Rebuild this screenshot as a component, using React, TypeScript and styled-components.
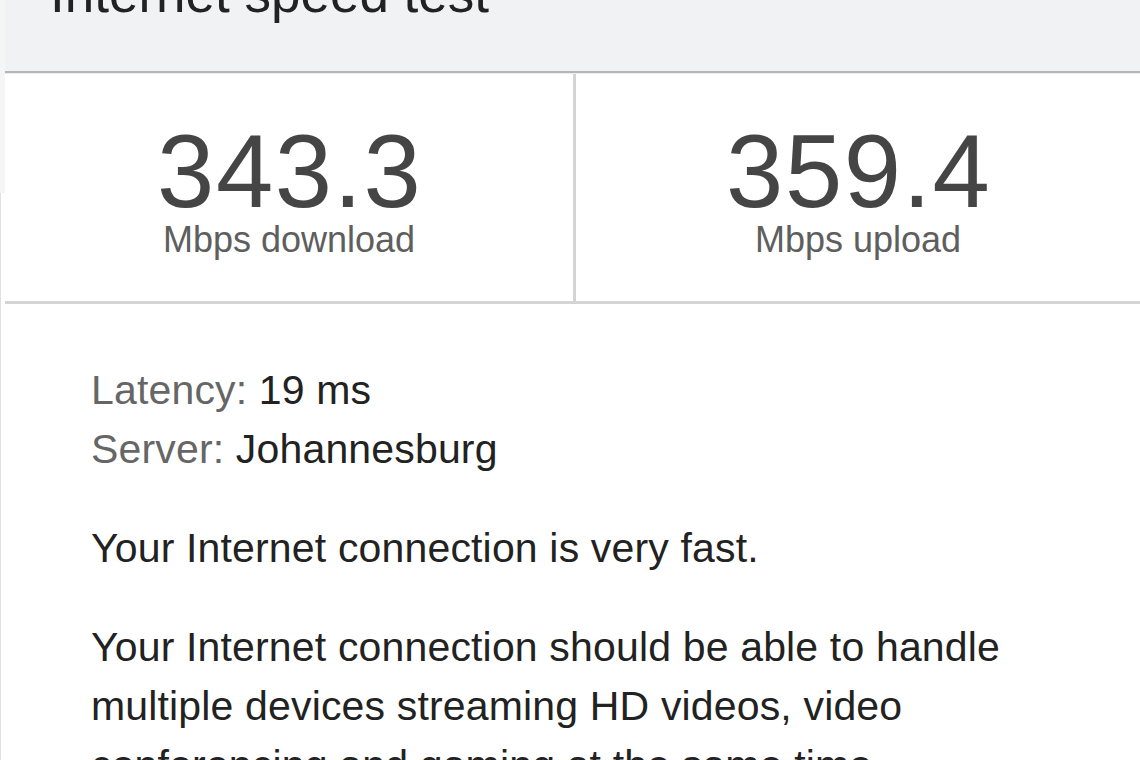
import React from "react";
import styled, { createGlobalStyle } from "styled-components";

const GlobalStyle = createGlobalStyle`
  html, body {
    margin: 0;
    padding: 0;
    height: 100%;
    overflow: hidden;
    background: #ffffff;
  }
  body {
    font-family: "Liberation Sans", Arial, Helvetica, sans-serif;
    -webkit-font-smoothing: antialiased;
  }
`;

const Page = styled.div`
  display: flex;
  width: 1140px;
  height: 760px;
  overflow: hidden;
`;

const Gutter = styled.div`
  flex: 0 0 5px;
  background:
    linear-gradient(to bottom, #f5f5f6 0, #f5f5f6 193px, transparent 193px),
    linear-gradient(to right, #e2e2e2 0, #e2e2e2 1px, #ffffff 1px);
`;

const Card = styled.div`
  flex: 1;
  min-width: 0;
  background: #ffffff;
`;

const Header = styled.div`
  height: 71px;
  background: #f1f2f4;
  border-bottom: 2px solid #b6b6b6;
  box-shadow: 0 1px 0 #ececec;
  padding-left: 45px;
  overflow: hidden;
  position: relative;
  z-index: 1;
`;

const Title = styled.h1`
  margin: -33px 0 0;
  font-size: 53px;
  line-height: 1;
  font-weight: 400;
  color: #222222;
  white-space: nowrap;
`;

const Stats = styled.div`
  display: flex;
  border-bottom: 3px solid #d4d4d4;
`;

const Stat = styled.div<{ $divider?: boolean }>`
  flex: ${(p) => (p.$divider ? "0 0 571px" : "1")};
  height: 228px;
  box-sizing: border-box;
  padding-top: 50px;
  display: flex;
  flex-direction: column;
  align-items: center;
  border-right: ${(p) => (p.$divider ? "3px solid #d4d4d4" : "none")};
`;

const Value = styled.div`
  font-size: 103px;
  line-height: 98px;
  color: #454545;
  letter-spacing: 1.5px;
  margin-right: -1.5px;
`;

const Label = styled.div`
  margin-top: 1px;
  font-size: 36px;
  line-height: 36px;
  color: #5e5e5e;
`;

const Info = styled.div`
  padding: 57px 40px 0 86px;
`;

const Para = styled.p`
  margin: 0 0 40px;
  font-size: 41px;
  line-height: 59px;
  letter-spacing: 0.16px;
  color: #222222;
`;

const Key = styled.span`
  color: #666666;
`;

const Line = styled.span`
  display: block;
`;

export default function App() {
  return (
    <>
      <GlobalStyle />
      <Page>
        <Gutter />
        <Card>
          <Header>
            <Title>Internet speed test</Title>
          </Header>
          <Stats>
            <Stat $divider>
              <Value>343.3</Value>
              <Label>Mbps download</Label>
            </Stat>
            <Stat>
              <Value>359.4</Value>
              <Label>Mbps upload</Label>
            </Stat>
          </Stats>
          <Info>
            <Para>
              <Line>
                <Key>Latency:</Key> 19 ms
              </Line>
              <Line>
                <Key>Server:</Key> Johannesburg
              </Line>
            </Para>
            <Para>Your Internet connection is very fast.</Para>
            <Para>
              Your Internet connection should be able to handle multiple
              devices streaming HD videos, video conferencing and gaming at the
              same time.
            </Para>
          </Info>
        </Card>
      </Page>
    </>
  );
}
